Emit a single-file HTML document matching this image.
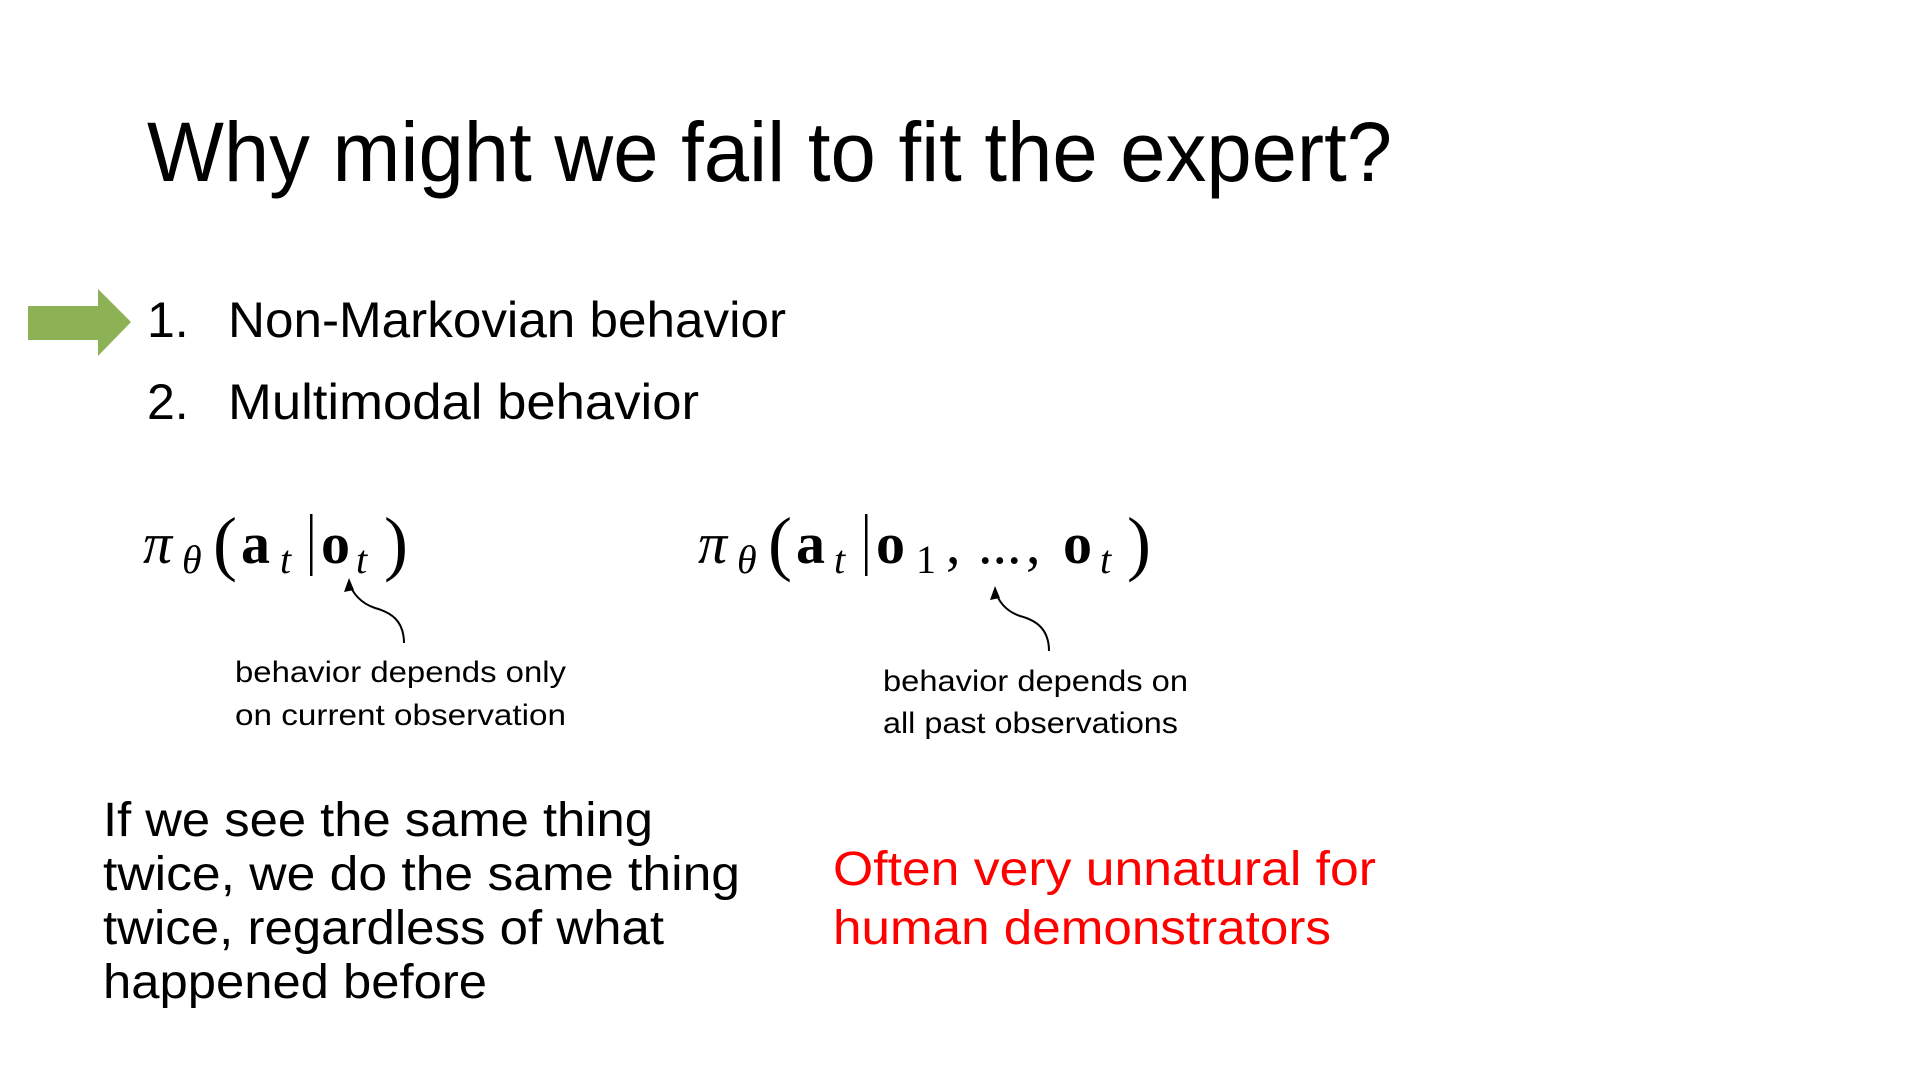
<!DOCTYPE html>
<html><head><meta charset="utf-8"><style>html,body{margin:0;padding:0;background:#fff}svg{display:block}</style></head>
<body>
<svg width="1920" height="1080" viewBox="0 0 1920 1080" xmlns="http://www.w3.org/2000/svg">
<rect width="1920" height="1080" fill="#fff"/>
<g font-family="Liberation Sans, sans-serif" fill="#000">
<text x="147" y="181" font-size="84" textLength="1245" lengthAdjust="spacingAndGlyphs">Why might we fail to fit the expert?</text>
<text x="147" y="337" font-size="50">1.</text>
<text x="228" y="337" font-size="50" textLength="558" lengthAdjust="spacingAndGlyphs">Non-Markovian behavior</text>
<text x="147" y="419" font-size="50">2.</text>
<text x="228" y="419" font-size="50" textLength="471" lengthAdjust="spacingAndGlyphs">Multimodal behavior</text>
<text font-size="30"><tspan x="235" y="682" textLength="331" lengthAdjust="spacingAndGlyphs">behavior depends only</tspan><tspan x="235" y="725" textLength="331" lengthAdjust="spacingAndGlyphs">on current observation</tspan></text>
<text font-size="30"><tspan x="883" y="691" textLength="305" lengthAdjust="spacingAndGlyphs">behavior depends on</tspan><tspan x="883" y="733" textLength="295" lengthAdjust="spacingAndGlyphs">all past observations</tspan></text>
<text font-size="48">
<tspan x="103" y="836" textLength="550" lengthAdjust="spacingAndGlyphs">If we see the same thing</tspan>
<tspan x="103" y="890" textLength="637" lengthAdjust="spacingAndGlyphs">twice, we do the same thing</tspan>
<tspan x="103" y="944" textLength="561" lengthAdjust="spacingAndGlyphs">twice, regardless of what</tspan>
<tspan x="103" y="998" textLength="384" lengthAdjust="spacingAndGlyphs">happened before</tspan>
</text>
<text font-size="48" fill="#ff0000">
<tspan x="833" y="885" textLength="543" lengthAdjust="spacingAndGlyphs">Often very unnatural for</tspan>
<tspan x="833" y="944" textLength="498" lengthAdjust="spacingAndGlyphs">human demonstrators</tspan>
</text>
</g>
<polygon points="28,306 98,306 98,289 131,322 98,356 98,340 28,340" fill="#8db255"/>
<g font-family="Liberation Serif, DejaVu Serif, serif" fill="#000">
<text font-size="58" font-style="italic" x="143" y="563">π</text>
<text font-size="40" font-style="italic" x="182" y="573">θ</text>
<text font-size="72" x="213" y="567">(</text>
<text font-size="58" font-weight="bold" x="241" y="563">a</text>
<text font-size="40" font-style="italic" x="280" y="573">t</text>
<rect x="310" y="514" width="2.5" height="62"/>
<text font-size="58" font-weight="bold" x="321" y="563">o</text>
<text font-size="40" font-style="italic" x="356" y="573">t</text>
<text font-size="72" x="384" y="567">)</text>

<text font-size="58" font-style="italic" x="698" y="563">π</text>
<text font-size="40" font-style="italic" x="737" y="573">θ</text>
<text font-size="72" x="768" y="567">(</text>
<text font-size="58" font-weight="bold" x="796" y="563">a</text>
<text font-size="40" font-style="italic" x="834" y="573">t</text>
<rect x="865" y="514" width="2.5" height="62"/>
<text font-size="58" font-weight="bold" x="876" y="563">o</text>
<text font-size="40" x="916" y="573">1</text>
<text font-size="58" x="946" y="563">,</text>
<text font-size="58" x="978" y="563">...</text>
<text font-size="58" x="1026" y="563">,</text>
<text font-size="58" font-weight="bold" x="1063" y="563">o</text>
<text font-size="40" font-style="italic" x="1100" y="573">t</text>
<text font-size="72" x="1127" y="567">)</text>
</g>
<g fill="none" stroke="#000" stroke-width="2">
<path d="M404,643 C404,620 390,612 375,608 C360,603 352,592 350,584"/>
<path d="M1049,651 C1049,628 1035,620 1020,616 C1005,611 998,600 996,592"/>
</g>
<polygon points="349,578 344,592 354,590" fill="#000"/>
<polygon points="995,586 990,600 1000,598" fill="#000"/>
</svg>
</body></html>
